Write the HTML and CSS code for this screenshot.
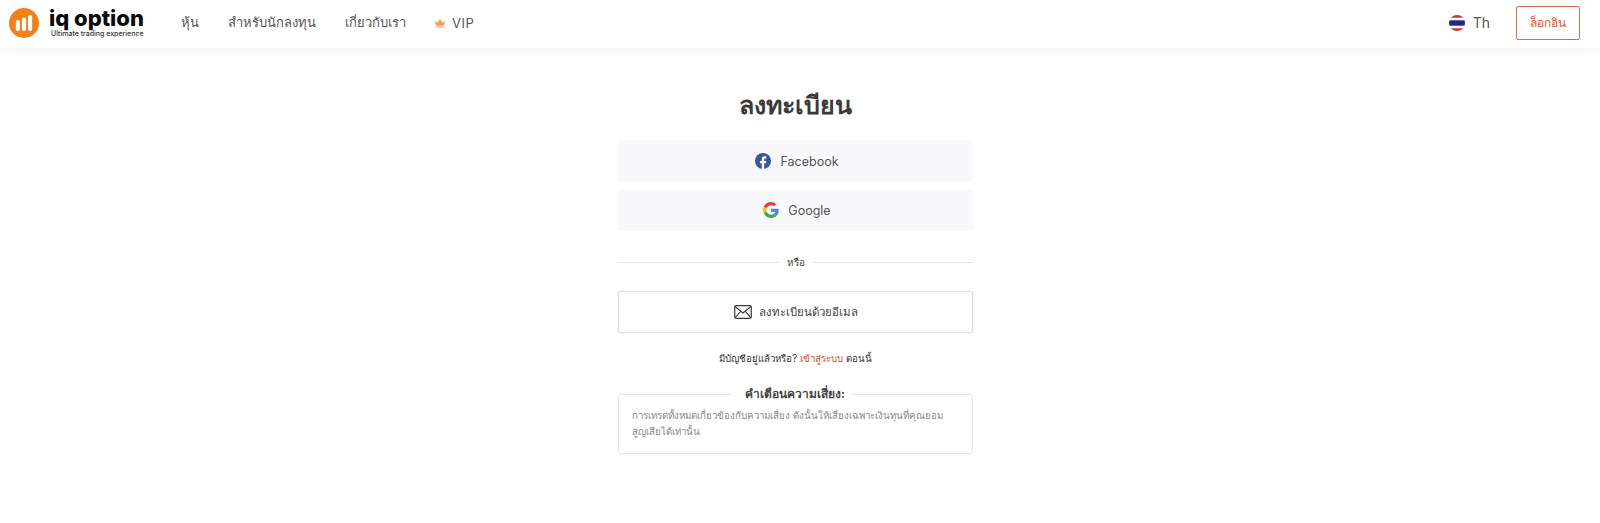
FILE: index.html
```html
<!DOCTYPE html>
<html lang="th">
<head>
<meta charset="utf-8">
<title>ลงทะเบียน</title>
<link rel="stylesheet" href="styles.css">
</head>
<body>
<header class="topbar">
  <a class="logo" href="#">
    <svg class="logo-mark" viewBox="0 0 30 30" width="30" height="30"><circle cx="15" cy="15" r="15" fill="#f57f17"/><rect x="6.800" y="12" width="4.200" height="11" rx="2.100" fill="#fff"/><rect x="12.900" y="9.500" width="4.200" height="13.500" rx="2.100" fill="#fff"/><rect x="19" y="7" width="4.200" height="16" rx="2.100" fill="#fff"/></svg>
    <span class="logo-text"><span class="logo-name">iq option</span><span class="logo-tag">Ultimate trading experience</span></span>
  </a>
  <nav class="nav">
    <a href="#">หุ้น</a>
    <a href="#">สำหรับนักลงทุน</a>
    <a href="#">เกี่ยวกับเรา</a>
    <a class="vip" href="#"><svg viewBox="0 0 12 10" width="12" height="10"><path d="M1 2.500 3.600 5 6 .8 8.400 5 11 2.500 10 7.500H2Z" fill="#f6935a"/><rect x="2.200" y="8" width="7.600" height="1.500" fill="#f6b48a"/></svg>VIP</a>
  </nav>
  <div class="top-right">
    <span class="lang"><svg viewBox="0 0 16 16" width="16" height="16"><defs><clipPath id="flagclip"><circle cx="8" cy="8" r="8"/></clipPath></defs><g clip-path="url(#flagclip)"><rect width="16" height="16" fill="#fff"/><rect width="16" height="2.700" fill="#c8313e"/><rect y="13.300" width="16" height="2.700" fill="#c8313e"/><rect y="5.300" width="16" height="5.400" fill="#1f2a7c"/></g></svg>Th</span>
    <a class="login" href="#">ล็อกอิน</a>
  </div>
</header>
<main class="page">
  <section class="panel">
    <h1 class="title">ลงทะเบียน</h1>
    <a class="social" href="#"><svg viewBox="0 0 16 16" width="16" height="16"><circle cx="8" cy="8" r="8" fill="#3b5998"/><path d="M6.800 16V10.300H4.900V8h1.900V6.300c0-1.900 1.100-3 2.900-3 .8 0 1.600.2 1.600.2v1.900h-.9c-.9 0-1.200.6-1.200 1.200V8h2.100l-.3 2.300H9.200V16Z" fill="#fff"/></svg>Facebook</a>
    <a class="social" href="#"><svg viewBox="0 0 48 48" width="16" height="16"><path fill="#EA4335" d="M24 9.500c3.500 0 6.700 1.300 9.100 3.500l6.800-6.800C35.900 2.400 30.300 0 24 0 14.600 0 6.500 5.400 2.600 13.200l7.900 6.200C12.400 13.700 17.700 9.500 24 9.500z"/><path fill="#4285F4" d="M46.900 24.500c0-1.600-.1-3.100-.4-4.500H24v9h12.900c-.6 3-2.200 5.500-4.700 7.200l7.700 6c4.500-4.200 7-10.300 7-17.700z"/><path fill="#FBBC05" d="M10.500 28.600c-.5-1.400-.8-3-.8-4.600s.3-3.200.8-4.600l-7.900-6.200C.9 16.500 0 20.100 0 24s.9 7.500 2.600 10.800z"/><path fill="#34A853" d="M24 48c6.500 0 11.900-2.100 15.900-5.800l-7.700-6c-2.200 1.500-4.900 2.300-8.200 2.300-6.300 0-11.600-4.200-13.500-9.900l-7.900 6.200C6.500 42.600 14.600 48 24 48z"/></svg>Google</a>
    <div class="divider"><span>หรือ</span></div>
    <a class="email" href="#"><svg viewBox="0 0 18 14" width="18" height="14"><rect x=".7" y=".7" width="16.600" height="12.600" rx="1.500" fill="none" stroke="#3a3a3a" stroke-width="1.200"/><path d="M1 1.500 9 8l8-6.500M1 12.800 6.500 6.500M17 12.800 11.500 6.500" fill="none" stroke="#3a3a3a" stroke-width="1.100"/></svg>ลงทะเบียนด้วยอีเมล</a>
    <p class="have">มีบัญชีอยู่แล้วหรือ? <a href="#">เข้าสู่ระบบ</a> ตอนนี้</p>
    <fieldset class="risk">
      <legend>คำเตือนความเสี่ยง:</legend>
      <p>การเทรดทั้งหมดเกี่ยวข้องกับความเสี่ยง ดังนั้นให้เสี่ยงเฉพาะเงินทุนที่คุณยอมสูญเสียได้เท่านั้น</p>
    </fieldset>
  </section>
</main>
</body>
</html>
```
FILE: styles.css
```css
* { box-sizing: border-box; }
html, body { margin: 0; padding: 0; }
body {
  height: 523px;
  overflow: hidden;
  background: #fff;
  color: #333;
  font-family: "Inter", "Noto Sans", sans-serif;
}
a { text-decoration: none; color: inherit; }

.topbar {
  height: 48px;
  display: flex;
  align-items: center;
  background: #fff;
  box-shadow: 0 2px 10px rgba(0, 0, 0, .05);
  padding: 0 20px 3px 9px;
}
.logo { display: flex; align-items: center; gap: 10px; width: 172px; }
.logo-mark { flex: none; }
.logo-text { display: flex; flex-direction: column; padding-top: 1px; }
.logo-name {
  font: 800 22px/22px "Inter", sans-serif;
  color: #0b0b0b;
}
.logo-tag { font: 500 7px/10px "Inter", sans-serif; color: #333; white-space: nowrap; margin-left: 2px; }

.nav { display: flex; align-items: center; gap: 29px; font-size: 13px; color: #555; }
.vip { display: flex; align-items: center; gap: 6px; margin-left: -1px; letter-spacing: .5px; }

.top-right { margin-left: auto; display: flex; align-items: center; gap: 26px; }
.lang { display: flex; align-items: center; gap: 8px; font-size: 14px; color: #555; }
.login {
  width: 64px;
  height: 34px;
  display: flex;
  align-items: center;
  justify-content: center;
  border: 1px solid #dd6a55;
  border-radius: 2px;
  color: #d9573f;
  font-size: 12px;
}

.page { display: flex; justify-content: center; }
.panel { width: 355px; margin-right: 9px; }
.title {
  margin: 38px 0 16px;
  height: 38px;
  font-size: 25px;
  line-height: 38px;
  font-weight: 700;
  text-align: center;
  color: #3a3a3a;
}
.social {
  height: 42px;
  margin-bottom: 7px;
  padding-left: 3px;
  display: flex;
  align-items: center;
  justify-content: center;
  gap: 9px;
  background: #f9f9fb;
  border-radius: 2px;
  font-size: 12.500px;
  color: #555;
}
.divider {
  margin-top: 23px;
  height: 16px;
  display: flex;
  align-items: center;
  gap: 8px;
  font-size: 10px;
  color: #444;
}
.divider::before, .divider::after { content: ""; flex: 1; height: 1px; background: #e4e4e6; }
.email {
  margin-top: 21px;
  height: 42px;
  display: flex;
  align-items: center;
  justify-content: center;
  gap: 7px;
  border: 1px solid #dcdde0;
  border-radius: 2px;
  font-size: 11.500px;
  color: #444;
}
.have { margin: 18px 0 0; height: 16px; text-align: center; font-size: 9.700px; line-height: 16px; color: #333; }
.have a { color: #d9472f; }
.risk {
  margin: 19px 0 0;
  padding: 6px 21px 0 13px;
  height: 68px;
  border: 1px solid #e6e6e9;
  border-radius: 3px;
}
.risk legend {
  margin: 0 auto;
  padding: 0 7px 0 14px;
  font-size: 12px;
  line-height: 16px;
  font-weight: 700;
  color: #444;
}
.risk p { margin: 0; font-size: 9.750px; line-height: 16px; color: #888; }
```
